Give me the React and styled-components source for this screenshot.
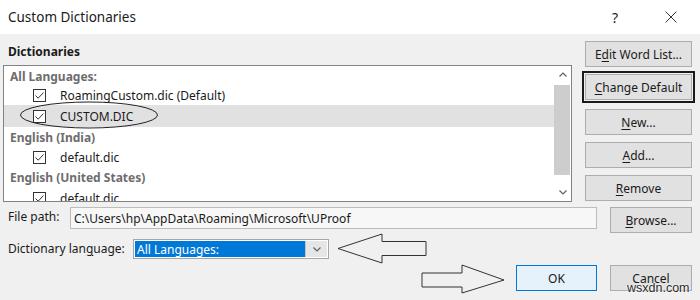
import React from 'react';
import styled, { createGlobalStyle } from 'styled-components';

const Global = createGlobalStyle`
  html, body { margin: 0; padding: 0; background: #f0f0f0; }
  #root { width: 700px; height: 300px; overflow: hidden; }
`;

const Dialog = styled.div`
  position: relative;
  width: 700px;
  height: 300px;
  background: #f0f0f0;
  color: #1a1a1a;
  font-family: "Noto Sans", "Open Sans", sans-serif;
  font-size: 12px;
  display: flex;
  flex-direction: column;
  overflow: hidden;
`;

const TitleBar = styled.div`
  height: 34px;
  background: #fff;
  display: flex;
  align-items: center;
  padding-left: 8px;
  padding-right: 6px;
`;

const Title = styled.div`
  flex: 1;
  font-size: 13.5px;
  color: #1a1a1a;
`;

const TitleControls = styled.div`
  display: flex;
  gap: 10px;
  height: 100%;
`;

const TitleButton = styled.div`
  width: 46px;
  height: 100%;
  display: flex;
  align-items: center;
  justify-content: center;
  font-size: 14px;
  color: #222;
`;

const Top = styled.div`
  display: flex;
  padding: 0 8px 0 3px;
`;

const LeftCol = styled.div`
  width: 569px;
  display: flex;
  flex-direction: column;
`;

const GroupLabel = styled.div`
  font-weight: 700;
  line-height: 16px;
  margin: 10px 0 5px 5px;
`;

const ListBox = styled.div`
  height: 137px;
  box-sizing: border-box;
  border: 1px solid #828282;
  background: #fff;
  display: flex;
`;

const Rows = styled.div`
  flex: 1;
  display: flex;
  flex-direction: column;
  overflow: hidden;
`;

const Header = styled.div`
  height: ${p => p.$h || 20}px;
  flex: none;
  display: flex;
  align-items: center;
  padding-left: 6px;
  font-weight: 700;
  color: #6d6d6d;
  white-space: nowrap;
`;

const Item = styled.div`
  position: relative;
  height: ${p => p.$h || 20}px;
  flex: none;
  display: flex;
  align-items: center;
  padding-left: 29px;
  white-space: nowrap;
  background: ${p => (p.$selected ? '#e1e1e1' : 'transparent')};
`;

const Check = styled.span`
  width: 13px;
  height: 13px;
  box-sizing: border-box;
  border: 1px solid #333;
  background: #fff;
  display: inline-flex;
  align-items: center;
  justify-content: center;
  margin-right: 14px;
`;

const Ellipse = styled.svg`
  position: absolute;
  left: 16px;
  top: -4px;
  pointer-events: none;
  overflow: visible;
`;

const ScrollBar = styled.div`
  width: 17px;
  flex: none;
  display: flex;
  flex-direction: column;
  background: #fff;
`;

const ScrollArrow = styled.div`
  height: 17px;
  display: flex;
  align-items: center;
  justify-content: center;
`;

const Thumb = styled.div`
  margin: 2px 1px 0 0;
  height: 90px;
  background: #cdcdcd;
`;

const Spacer = styled.div`
  flex: 1;
`;

const RightCol = styled.div`
  margin: 7px 0 0 13px;
  width: 107px;
  display: flex;
  flex-direction: column;
  gap: 7px;
`;

const Button = styled.div`
  height: 26px;
  width: ${p => p.$w || 107}px;
  box-sizing: border-box;
  flex: none;
  border: 1px solid ${p => (p.$primary ? '#0078d7' : '#adadad')};
  background: ${p => (p.$primary ? '#e5f1fb' : '#e1e1e1')};
  display: flex;
  align-items: center;
  justify-content: center;
  color: #1a1a1a;
  white-space: nowrap;
  ${p => p.$marked && `
    outline: 2px solid #1a1a1a;
    outline-offset: 1px;
    margin-bottom: 2px;
  `}
`;

const U = styled.span`
  text-decoration: underline;
  text-underline-offset: 2px;
`;

const FieldRow = styled.div`
  display: flex;
  align-items: ${p => p.$align || 'flex-start'};
  padding: 0 8px;
  margin-top: ${p => p.$mt || 0}px;
  height: ${p => p.$h}px;
`;

const Label = styled.div`
  width: ${p => p.$w}px;
  flex: none;
  line-height: 16px;
  white-space: nowrap;
  margin-top: ${p => p.$mt || 0}px;
`;

const PathInput = styled.div`
  width: 527px;
  height: 22px;
  box-sizing: border-box;
  border: 1px solid #bcbcbc;
  background: #f7f7f7;
  display: flex;
  align-items: center;
  padding-left: 3px;
  margin-right: 13px;
  white-space: nowrap;
`;

const Select = styled.div`
  width: 196px;
  height: 20px;
  box-sizing: border-box;
  border: 1px solid #a6a6a6;
  background: #fff;
  padding: 1px;
  display: flex;
  flex: none;
`;

const SelectValue = styled.div`
  flex: 1;
  background: #0078d7;
  color: #fff;
  display: flex;
  align-items: center;
  padding-left: 2px;
  white-space: nowrap;
`;

const SelectDrop = styled.div`
  width: 21px;
  background: #e6e6e6;
  border-left: 1px solid #c4c4c4;
  display: flex;
  align-items: center;
  justify-content: center;
`;

const ArrowSvg = styled.svg`
  flex: none;
  margin: ${p => p.$m};
  overflow: visible;
`;

const BottomRow = styled.div`
  display: flex;
  align-items: center;
  justify-content: flex-end;
  padding-right: 8px;
  height: 26px;
  gap: 13px;
`;

const Watermark = styled.div`
  position: absolute;
  left: 627px;
  top: 281px;
  font-family: "Liberation Sans", Arial, sans-serif;
  font-size: 12.5px;
  color: #2a2a2a;
  text-shadow: 0 0 2px #fff, 0 0 2px #fff;
`;

const CheckMark = () => (
  <svg width="11" height="11" viewBox="0 0 11 11">
    <path d="M1.5 5.5 L4.2 8.2 L9.5 2.5" fill="none" stroke="#333" strokeWidth="1" />
  </svg>
);

const Chevron = ({ up }) => (
  <svg width="8" height="5" viewBox="0 0 8 5">
    <path d={up ? 'M0.5 4.5 L4 1 L7.5 4.5' : 'M0.5 0.5 L4 4 L7.5 0.5'} fill="none" stroke="#606060" strokeWidth="1.2" />
  </svg>
);

const Entry = ({ name, selected, circled, h }) => (
  <Item $selected={selected} $h={h}>
    <Check><CheckMark /></Check>
    {name}
    {circled && (
      <Ellipse width="138" height="28">
        <ellipse cx="69" cy="14" rx="68.5" ry="13" fill="none" stroke="#222" strokeWidth="1" />
      </Ellipse>
    )}
  </Item>
);

export default function App() {
  return (
    <Dialog>
      <Global />
      <TitleBar>
        <Title>Custom Dictionaries</Title>
        <TitleControls>
          <TitleButton>?</TitleButton>
          <TitleButton>
            <svg width="12" height="12" viewBox="0 0 12 12">
              <path d="M0.5 0.5 L11.5 11.5 M11.5 0.5 L0.5 11.5" stroke="#333" strokeWidth="1" />
            </svg>
          </TitleButton>
        </TitleControls>
      </TitleBar>

      <Top>
        <LeftCol>
          <GroupLabel>Dictionaries</GroupLabel>
          <ListBox>
            <Rows>
              <Header $h={20}>All Languages:</Header>
              <Entry name="RoamingCustom.dic (Default)" h={19} />
              <Entry name="CUSTOM.DIC" selected circled h={22} />
              <Header $h={21}>English (India)</Header>
              <Entry name="default.dic" h={19} />
              <Header $h={21}>English (United States)</Header>
              <Entry name="default.dic" h={20} />
            </Rows>
            <ScrollBar>
              <ScrollArrow><Chevron up /></ScrollArrow>
              <Thumb />
              <Spacer />
              <ScrollArrow><Chevron /></ScrollArrow>
            </ScrollBar>
          </ListBox>
        </LeftCol>
        <RightCol>
          <Button>E<U>d</U>it Word List...</Button>
          <Button $marked><U>C</U>hange Default</Button>
          <Button><U>N</U>ew...</Button>
          <Button><U>A</U>dd...</Button>
          <Button><U>R</U>emove</Button>
        </RightCol>
      </Top>

      <FieldRow $mt={5} $h={26}>
        <Label $w={62} $mt={2}>File path:</Label>
        <PathInput>C:\Users\hp\AppData\Roaming\Microsoft\UProof</PathInput>
        <Button $w={82}><U>B</U>rowse...</Button>
      </FieldRow>

      <FieldRow $h={32} $align="center">
        <Label $w={125}>Dictionary lan<U>g</U>uage:</Label>
        <Select>
          <SelectValue>All Languages:</SelectValue>
          <SelectDrop><Chevron /></SelectDrop>
        </Select>
        <ArrowSvg $m="0 0 0 8px" width="91" height="32" viewBox="0 0 91 32">
          <polygon points="1,15.5 45,1 45,8.5 89,8.5 89,22.5 45,22.5 45,30" fill="none" stroke="#333" strokeWidth="1" />
        </ArrowSvg>
      </FieldRow>

      <BottomRow>
        <ArrowSvg $m="0 -3px 0 0" width="85" height="32" viewBox="0 0 85 32">
          <polygon points="1,11 41,11 41,3 83,18 41,31 41,25 1,25" fill="none" stroke="#333" strokeWidth="1" />
        </ArrowSvg>
        <Button $w={81} $primary>OK</Button>
        <Button $w={82}>Cancel</Button>
      </BottomRow>

      <Watermark>wsxdn.com</Watermark>
    </Dialog>
  );
}
